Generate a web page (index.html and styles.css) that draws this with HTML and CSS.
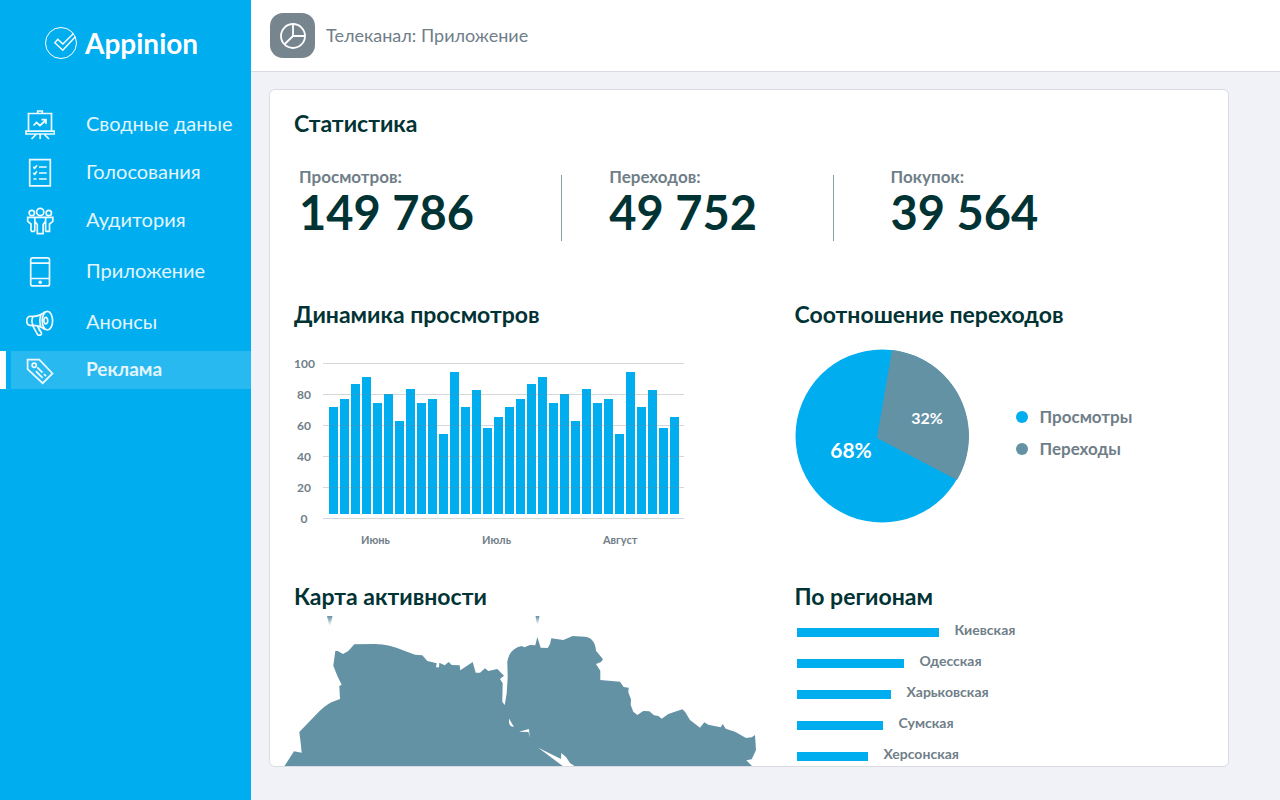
FILE: index.html
```html
<!DOCTYPE html>
<html lang="ru">
<head>
<meta charset="utf-8">
<meta name="viewport" content="width=device-width, initial-scale=1">
<title>Appinion</title>
<link rel="stylesheet" href="styles.css">
</head>
<body>
<div class="app">
  <aside class="sidebar">
    <a class="logo" href="#">
      <svg class="logo-mark" viewBox="0 0 34 34" aria-hidden="true"><circle cx="17" cy="17" r="15.5"/><path class="check" d="M29.5 7.5 18.8 18 13.8 13.3 10.8 16.7 18.8 24.3 31.3 10.7"/></svg>
      <span>Appinion</span>
    </a>
    <nav>
      <ul class="menu">
        <li><a class="menu-link" href="#"><svg class="icon" viewBox="0 0 30 30" aria-hidden="true"><path d="M3.5 21V3.5h23V21M12.7 3.5V1h4.6v2.5M1 21.2h28.5v2.8H1zM11 24.5 6.5 29M19.5 24.5 24 29M15.2 24.5V29M8.5 15.5l3-3 3.5 3 5.5-5M16.5 9.7h4.5V14"/></svg><span>Сводные даные</span></a></li>
        <li><a class="menu-link" href="#"><svg class="icon" viewBox="0 0 30 30" aria-hidden="true"><path d="M4.7 1.7h20.6v26.1H4.7zM14 9h7.7M14 15h7.7M14 21h7.7M8.5 21h3M8.3 9l1.4 1.2 2.3-3M8.3 15l1.4 1.2 2.3-3"/></svg><span>Голосования</span></a></li>
        <li><a class="menu-link" href="#"><svg class="icon" viewBox="0 0 30 30" aria-hidden="true"><circle cx="15.2" cy="6" r="3.6"/><circle cx="6.8" cy="7" r="2.7"/><circle cx="23.8" cy="7" r="2.7"/><path d="M6 25.3V18l-3.3-2.7v-4h25.1v4L24.5 18v7.3h-4.2M6 25.3h3.8M9.8 11.3v4l2.5 3.2v9.2h5.8v-9.2l2.5-3.2v-4M9.8 15.3v10M20.6 15.3v10"/></svg><span>Аудитория</span></a></li>
        <li><a class="menu-link menu-link-tall" href="#"><svg class="icon" viewBox="0 0 30 30" aria-hidden="true"><rect x="5.7" y=".9" width="18.8" height="28" rx="2"/><path d="M5.7 6.2h18.8M5.7 21.5h18.8"/><circle class="solid" cx="15.2" cy="25.2" r="1.8"/></svg><span>Приложение</span></a></li>
        <li><a class="menu-link" href="#"><svg class="icon" viewBox="0 0 30 30" aria-hidden="true"><ellipse cx="22.4" cy="12.7" rx="5.2" ry="9.3"/><path d="M20.2 3.8C16 7 12.5 8.3 9 8.3H5c-4.3 0-4.3 9 0 9h3.2c4 0 8 1.1 11.8 4.2M8.2 8.3c-1.6 2.8-1.6 6.2 0 9M16.2 6.4c-1.7 3.8-1.7 8.5-.2 12.8M20 9.6c3.6-1.2 3.6 7.4 0 6.2-1.4-1.8-1.4-4.4 0-6.2M7.5 17.3l5.1 9.4c2.5 1.2 4.4 0 3.8-2l-4.1-6.7M13.5 22.5l1.2-.8"/></svg><span>Анонсы</span></a></li>
        <li><a class="menu-link menu-link-active" href="#" aria-current="page"><svg class="icon" viewBox="0 0 30 30" aria-hidden="true"><path d="M2.6 3.6h11.7l13.2 13.8-9.8 9.8L2.6 13.2zM10.9 15.2l6.7 6.7M12.3 11.4l5.2 5.2M19 18.2l2 2"/><circle cx="9.2" cy="9.3" r="2.1"/></svg><span>Реклама</span></a></li>
      </ul>
    </nav>
  </aside>

  <div class="content">
    <header class="topbar">
      <span class="channel-badge"><svg viewBox="0 0 26 26" aria-hidden="true"><circle cx="13" cy="13" r="12"/><path d="M13 1v12h12M13 13l-8.2 8"/></svg></span>
      <span class="channel-name">Телеканал: Приложение</span>
    </header>

    <main class="main">
      <div class="card">
        <section>
          <h1 class="heading">Статистика</h1>
          <div class="stats">
            <div class="stat"><p class="stat-label">Просмотров:</p><p class="stat-value">149 786</p></div>
            <div class="divider"></div>
            <div class="stat stat-second"><p class="stat-label">Переходов:</p><p class="stat-value">49 752</p></div>
            <div class="divider"></div>
            <div class="stat stat-third"><p class="stat-label">Покупок:</p><p class="stat-value">39 564</p></div>
          </div>
        </section>

        <div class="panels">
          <section>
            <h2 class="heading">Динамика просмотров</h2>
            <div class="chart">
              <ul class="scale"><li>100</li><li>80</li><li>60</li><li>40</li><li>20</li><li>0</li></ul>
              <div class="plot">
                <div class="bars">
                  <i style="height:107px"></i><i style="height:115px"></i><i style="height:130px"></i><i style="height:137px"></i><i style="height:111px"></i><i style="height:120px"></i><i style="height:93px"></i><i style="height:125px"></i><i style="height:111px"></i><i style="height:115px"></i><i style="height:80px"></i><i style="height:142px"></i><i style="height:107px"></i><i style="height:124px"></i><i style="height:86px"></i><i style="height:97px"></i><i style="height:107px"></i><i style="height:115px"></i><i style="height:130px"></i><i style="height:137px"></i><i style="height:111px"></i><i style="height:120px"></i><i style="height:93px"></i><i style="height:125px"></i><i style="height:111px"></i><i style="height:115px"></i><i style="height:80px"></i><i style="height:142px"></i><i style="height:107px"></i><i style="height:124px"></i><i style="height:86px"></i><i style="height:97px"></i>
                </div>
                <div class="gridlines"><b></b><b></b><b></b><b></b><b></b><b></b></div>
              </div>
              <div class="months"><span>Июнь</span><span>Июль</span><span>Август</span></div>
            </div>
          </section>

          <section>
            <h2 class="heading">Соотношение переходов</h2>
            <div class="ratio">
              <svg class="pie" viewBox="795 349 174 174" role="img" aria-label="68% и 32%">
                <circle class="pie-views" cx="882" cy="436" r="86.5"/>
                <path class="pie-clicks" d="M877 438 892 350.1A86.5 86.5 0 0 1 957 480z"/>
                <text class="pie-text-large" x="851" y="458">68%</text>
                <text class="pie-text" x="927" y="424">32%</text>
              </svg>
              <ul class="legend"><li><i class="dot dot-views"></i>Просмотры</li><li><i class="dot dot-clicks"></i>Переходы</li></ul>
            </div>
          </section>

          <section>
            <h2 class="heading">Карта активности</h2>
            <svg class="map" viewBox="284 611 474 199" role="img" aria-label="Карта активности">
              <defs>
                <linearGradient id="fade" x1="0" y1="0" x2="0" y2="1"><stop offset="0" stop-color="#6492a5"/><stop offset="1" stop-color="#6492a5" stop-opacity="0"/></linearGradient>
              </defs>
              <path class="land" d="M284.5 766 294 751.3 301.7 752.7 300.7 743 299.3 732 315 715.7Q325 705 332 702L340 699 339.3 686 341.7 684.7 337.7 676.7 333.3 665.7 335.3 651 337.7 651 343 654 348.3 651 354.3 644.3 375 644Q390 644.5 403 650.3L415 654.7 422.3 655.3 427.3 661 436.7 663.3 436 667.3H439L439.3 662.7 444.7 665.3 448.7 662 451.7 665 459.7 665.3 460.3 670.3 472.7 662 475.7 672.7H480L485 668.3 488.3 671 497.3 669 504 675.7 500 679 502.7 683.3 502.3 701.7 504.7 705 506.7 693 507.7 676.7 507.3 661.7Q509 651 518 647L521.7 646 524.3 647.3 530 645 535.3 645.3 537.3 637 540.7 647.7 547.7 648 550 644 551.3 638.3 563.3 640 572.7 636 585 636.7Q595 638 596 650.7L603 659.3 601 662 596 664 600.3 670.7V680L620 681.7 623.7 687 628.7 687.7 628.3 692.3 631 699.3 630.7 705 633.3 711.7 637.3 715 643.3 711 649.3 711.3 654 715.3 658.3 716 661.7 718.7 668.3 714 682.3 709.3 685 711.7 690 720 700 727.7 704.3 722.3 708.3 724.7 720.7 727.3 722.7 724 725.7 728.7 735 731.7 746 738 751.7 737.3 755 735 756 750 751.7 759.3 746.3 760.3 752 766 758 810H270z"/>
              <path class="water" d="M509 718.5 514 727 510.5 726 509 723zM519 731.7 529 729 529.7 738 528.5 732zM538.3 747.7 561 759 561.3 753 566 757 570 763 576 767H564z"/>
              <path fill="url(#fade)" d="M327 616h5.5l-2.2 10h-1z"/>
              <path fill="url(#fade)" d="M535.5 616h4l-1.5 9h-1z"/>
            </svg>
          </section>

          <section>
            <h2 class="heading">По регионам</h2>
            <ul class="regions">
              <li><i style="width:142px"></i>Киевская</li>
              <li><i style="width:107px"></i>Одесская</li>
              <li><i style="width:94px"></i>Харьковская</li>
              <li><i style="width:86px"></i>Сумская</li>
              <li><i style="width:71px"></i>Херсонская</li>
            </ul>
          </section>
        </div>
      </div>
    </main>
  </div>
</div>
</body>
</html>
```
FILE: styles.css
```css
* { box-sizing: border-box; }
body { margin: 0; font-family: Lato, "Open Sans", sans-serif; color: #6f7e88; background: #f0f2f7; }
ul, p, h1, h2 { margin: 0; padding: 0; list-style: none; }
a { color: inherit; text-decoration: none; }
svg { display: block; }

.app { display: flex; height: 100vh; }

.sidebar { flex: 0 0 251px; background: #00adef; color: #e3f5fd; }
.logo { display: flex; align-items: center; gap: 7px; padding: 26px 0 0 44px; margin-bottom: 45px; color: #fff; font-size: 28px; font-weight: 700; line-height: 34px; }
.logo-mark { width: 34px; height: 34px; fill: none; stroke: #fff; stroke-width: 1; }
.check { stroke-width: 1.4; }
.menu { display: flex; flex-direction: column; gap: 10px; }
.menu-link { display: flex; align-items: center; gap: 31px; height: 38px; padding: 2px 0 0 25px; font-size: 20px; line-height: 24px; }
.menu-link span { padding-bottom: 4px; }
.menu-link-tall { height: 44px; }
.menu-link-active { padding-left: 19px; border-left: 6px solid #fff; background: linear-gradient(90deg, #00adef 5px, #28b9f1 5px); font-size: 19px; font-weight: 700; }
.icon { flex: none; width: 30px; height: 30px; fill: none; stroke: #eefaff; stroke-width: 1.7; }
.solid { fill: #eefaff; stroke: none; }

.content { flex: 1; min-width: 0; display: flex; flex-direction: column; }
.topbar { display: flex; align-items: center; gap: 11px; flex: none; height: 72px; padding-left: 19px; background: #fff; border-bottom: 1px solid #dadce3; font-size: 18px; }
.channel-name { padding-bottom: 2px; }
.channel-badge { display: grid; place-items: center; width: 45px; height: 45px; border-radius: 13px; background: #77858f; }
.channel-badge svg { width: 26px; height: 26px; fill: none; stroke: #fff; stroke-width: 1.8; }

.main { flex: 1; min-height: 0; padding: 17px 51px 33px 18px; }
.card { height: 100%; padding: 20px 24px 0; overflow: hidden; background: #fff; border: 1px solid #dadce3; border-radius: 6px; }
.heading { padding-bottom: 2px; color: #023334; font-size: 23px; font-weight: 700; line-height: 26px; }

.stats { display: grid; grid-template-columns: 262fr 1px 270fr 1px 370fr; padding: 29px 0 0 5px; }
.stat-second { padding-left: 47px; }
.stat-third { padding-left: 57px; }
.stat-label { font-size: 17px; font-weight: 700; line-height: 20px; }
.stat-value { color: #023334; font-size: 47px; font-weight: 700; line-height: 50px; }
.divider { margin-top: 8px; height: 66px; background: #8e9aa2; }

.panels { display: grid; grid-template-columns: 55fr 45fr; row-gap: 37px; padding-top: 60px; }
.chart { display: grid; grid-template-columns: 20px 1fr; column-gap: 9px; max-width: 390px; margin-top: 19px; font-size: 12px; font-weight: 700; }
.scale { line-height: 31px; text-align: center; }
.plot { display: grid; padding: 15px 0; }
.bars, .gridlines { grid-area: 1 / 1; display: flex; }
.bars { align-items: flex-end; gap: 2px; padding: 0 5px 5px 6px; }
.bars i { flex: 1; background: #00adef; }
.gridlines { z-index: 1; flex-direction: column; justify-content: space-between; }
.gridlines b { height: 1px; background: rgba(119, 133, 143, .32); }
.months { grid-column: 2; display: grid; grid-template-columns: 121fr 121fr 81fr; padding-left: 38px; font-size: 11px; line-height: 12px; }

.ratio { display: flex; align-items: center; gap: 47px; margin-top: 20px; }
.pie { flex: none; width: 174px; height: 174px; }
.pie-views { fill: #00adef; }
.pie-clicks { fill: #6492a5; }
.pie-text, .pie-text-large { fill: #fff; font-weight: 700; text-anchor: middle; }
.pie-text { font-size: 16px; }
.pie-text-large { font-size: 21px; }
.legend { padding-bottom: 7px; font-size: 17px; font-weight: 700; line-height: 32px; }
.legend li { display: flex; align-items: center; gap: 12px; }
.dot { width: 12px; height: 12px; border-radius: 50%; }
.dot-views { background: #00adef; }
.dot-clicks { background: #6492a5; }

.map { width: 474px; height: 199px; margin-left: -10px; }
.land { fill: #6492a5; }
.water { fill: #fff; }
.regions { padding: 6px 0 0 2px; font-size: 14px; font-weight: 700; line-height: 26px; }
.regions li { display: flex; align-items: flex-start; gap: 16px; height: 31px; }
.regions i { height: 9px; margin-top: 11px; background: #00adef; }
```
